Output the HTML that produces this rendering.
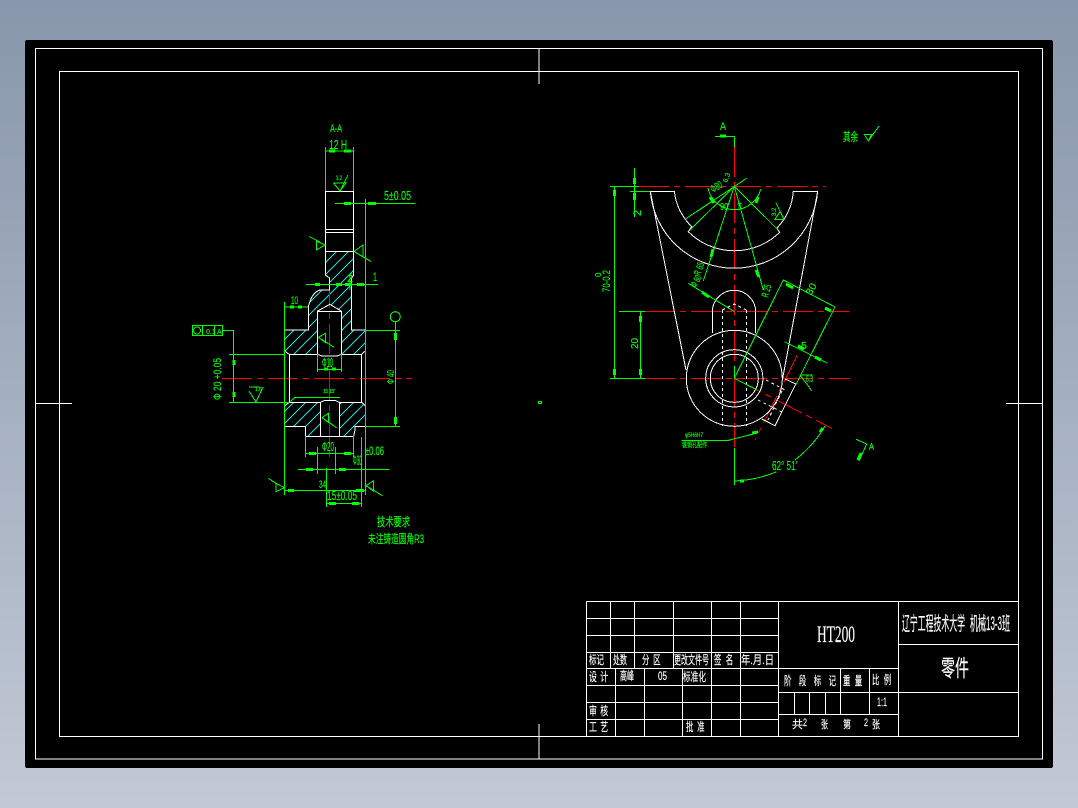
<!DOCTYPE html>
<html><head><meta charset="utf-8"><style>
html,body{margin:0;padding:0;width:1078px;height:808px;overflow:hidden;background:linear-gradient(#8897ab,#c2c9d6)}
svg{position:absolute;left:0;top:0}
text{font-family:"Liberation Sans","Noto Sans CJK SC",sans-serif}
.w line,.w path,.w polyline,.w circle,.w rect{fill:none;stroke:#fff;stroke-width:1}
.g line,.g path,.g polyline,.g circle,.g rect{fill:none;stroke:#0f0;stroke-width:1}
.g text{fill:#0f0;stroke:#0f0;stroke-width:.15}.t text{fill:#fff;stroke:#fff;stroke-width:.15}
.a line{stroke:#0f0;stroke-width:3}
.r line{stroke:#f00;stroke-width:1;stroke-dasharray:30 5 6 5}
.d path,.d line{fill:none;stroke:#fff;stroke-width:1;stroke-dasharray:3 3}
</style></head><body>
<svg width="1078" height="808" viewBox="0 0 1078 808" shape-rendering="crispEdges">
<defs><pattern id="h" width="12" height="12" patternUnits="userSpaceOnUse"><path d="M-1 13L13 -1M-1 1L1 -1M11 13L13 11" stroke="#1dd" stroke-width="1" fill="none"/></pattern></defs>
<rect x="25" y="40" width="1028" height="728" rx="2" fill="#000"/>
<g class="w">
<rect x="35.5" y="48.5" width="1007" height="710.5"/>
<rect x="59.5" y="71.5" width="959" height="665"/>
<line x1="539" y1="48" x2="539" y2="84"/><line x1="539" y1="724" x2="539" y2="759"/>
<line x1="35" y1="403.5" x2="72" y2="403.5"/><line x1="1006" y1="403.5" x2="1043" y2="403.5"/>
</g>
<rect x="538.5" y="401.5" width="3" height="2" fill="none" stroke="#0f0"/>

<!-- left view hatch -->
<path fill="url(#h)" d="M325.3 251.3H353.7V275L351.7 278V330H365.3V351L361.7 354.3H341.7V311.3L329.7 304.3 317.3 311.3V354.3H289.3L284.3 351V330H308.3V306.7Q312 292 320 290H329.7V278L325.3 275Z"/>
<path fill="url(#h)" d="M289.3 402.3H320.3V436.3H305.3V426.3H284.3V406ZM339.3 402.3H361.7L365.3 406V426.3H355L353.7 436.3H339.3Z"/>

<!-- red centre lines -->
<g class="r">
<line x1="222" y1="378.5" x2="412" y2="378.5"/>
<line x1="329.7" y1="278" x2="329.7" y2="457"/>
<line x1="639" y1="186.5" x2="825" y2="186.5"/>
<line x1="645" y1="311.5" x2="849" y2="311.5"/>
<line x1="645" y1="378.5" x2="849" y2="378.5"/>
<line x1="734.5" y1="147" x2="734.5" y2="447"/>
<line x1="734.3" y1="378.3" x2="832" y2="428.5"/>
<line x1="797.3" y1="355" x2="755" y2="440"/>
</g>

<!-- left view outlines -->
<g class="w">
<path d="M325.3 191.3H353.7V275L351.7 278V330H365.3V426.3H355V430L353.7 436.3H305.3V426.3H284.3V330H308.3V306.7Q312 292 320 290H329.7V278L325.3 275Z"/>
<path d="M325.3 229.3H353.7M325.3 232.3H353.7M325.3 251.3H353.7"/>
<path d="M317.3 354.3V311.3L329.7 304.3 341.7 311.3V354.3M317.3 311.3H341.7"/>
<path d="M284.3 351L289.3 354.3H317.3L322 356H337L341.7 354.3H361.7L365.3 351"/>
<path d="M284.3 406L289.3 402.3H320.3L325 400.3H335L339.3 402.3H361.7L365.3 406"/>
<path d="M289.3 354.3V402.3M361.7 354.3V402.3M320.3 402.3V436.3M339.3 402.3V436.3"/>
</g>

<!-- left view dims -->
<g class="g">
<path d="M325.5 147V191M353.5 147V191M325 151H354"/>
<path d="M335 203.5H415M365.5 199V495M306 284.5H378M350 275V290"/>
<path d="M284.5 302V495M284 307H308"/>
<circle cx="395.3" cy="316.7" r="5"/>
<path d="M395.5 322V426M365 330.5H400M365 426.5H400"/>
<rect x="192.5" y="325.5" width="30" height="10"/><circle cx="197" cy="330.5" r="3.5"/>
<path d="M202.5 325V335M214.5 325V335M222 330.5H233.5V402.5M229 354.5H285M229 402.5H289"/>
<path d="M317.5 354V372M341.5 354V372M317 369.5H342"/>
<path d="M290 401.7L295 397.5H340"/>
<path d="M305.5 436V457M353.5 436V457M305 453.5H353"/>
<path d="M298 469.5H389M317.5 447V474M335.5 447V474M361.5 437V495"/>
<path d="M284 490.5H366M326.5 468V507M361.5 490V507M326 503.5H362"/>
<path d="M318.3 337.3L325.7 333.3V342.7L318.3 337.3 334 347.3"/>
<path d="M322 417.7L328.3 413.3V422.3L322 417.7 336.7 427.7"/>
<path d="M268.3 478.3L276 483.3V491.7L284.3 487.7 276 483.3"/>
<path d="M366 485.7L373.3 481V491L366 485.7 382.3 495.7"/>
<path d="M309 236.5L320 242 316.5 241V250L325 245 316.5 241"/>
<path d="M354 251.5L363 245V257L354 251.5 371 261.5"/>
<path d="M333.5 183H346L340 191 333.5 183M340 191L348 175"/>
<path d="M249 387H260M249 391L256 402 263 387"/>
</g>
<g class="a">
<line x1="329" y1="151" x2="335" y2="151"/><line x1="344" y1="151" x2="351" y2="151"/>
<line x1="344" y1="203.5" x2="351" y2="203.5"/><line x1="368" y1="203.5" x2="376" y2="203.5"/>
<line x1="315" y1="284.5" x2="320" y2="284.5"/><line x1="336" y1="284.5" x2="342" y2="284.5"/><line x1="345" y1="284.5" x2="352" y2="284.5"/><line x1="357" y1="284.5" x2="364" y2="284.5"/>
<line x1="290" y1="307" x2="294" y2="307"/><line x1="298" y1="307" x2="302" y2="307"/>
<line x1="395.3" y1="333" x2="395.3" y2="340"/><line x1="395.3" y1="417" x2="395.3" y2="424"/>
<line x1="234" y1="360" x2="234" y2="365"/><line x1="234" y1="392" x2="234" y2="397"/>
<line x1="324" y1="369" x2="328" y2="369"/><line x1="332" y1="369" x2="336" y2="369"/>
<line x1="309" y1="453.5" x2="316" y2="453.5"/><line x1="344" y1="453.5" x2="351" y2="453.5"/>
<line x1="306" y1="469.5" x2="313" y2="469.5"/><line x1="339" y1="469.5" x2="346" y2="469.5"/>
<line x1="288" y1="490.5" x2="294" y2="490.5"/><line x1="356" y1="490.5" x2="364" y2="490.5"/>
<line x1="329" y1="503.5" x2="336" y2="503.5"/><line x1="352" y1="503.5" x2="359" y2="503.5"/>
</g>
<g class="g">
<text x="330" y="132" font-size="11" textLength="12" lengthAdjust="spacingAndGlyphs">A-A</text>
<text x="329" y="149" font-size="13" textLength="18" lengthAdjust="spacingAndGlyphs">12 H</text>
<text x="336" y="180" font-size="6" textLength="6" lengthAdjust="spacingAndGlyphs">3.2</text>
<text x="384" y="200" font-size="13" textLength="27" lengthAdjust="spacingAndGlyphs">5±0.05</text>
<text x="373" y="281" font-size="12" textLength="4" lengthAdjust="spacingAndGlyphs">1</text>
<text x="347" y="282" font-size="11" textLength="6" lengthAdjust="spacingAndGlyphs">2</text>
<text x="291" y="304" font-size="11" textLength="7" lengthAdjust="spacingAndGlyphs">10</text>
<text x="322" y="367" font-size="13" textLength="11" lengthAdjust="spacingAndGlyphs">Φ10</text>
<text x="322" y="451" font-size="13" textLength="12" lengthAdjust="spacingAndGlyphs">Φ20</text>
<text x="353" y="465" font-size="14" textLength="9" lengthAdjust="spacingAndGlyphs">Φ30</text>
<text x="365" y="455" font-size="12" textLength="19" lengthAdjust="spacingAndGlyphs">±0.06</text>
<text x="319" y="488" font-size="11" textLength="7" lengthAdjust="spacingAndGlyphs">34</text>
<text x="327" y="500" font-size="13" textLength="30" lengthAdjust="spacingAndGlyphs">15±0.05</text>
<text x="323" y="393" font-size="5" textLength="12" lengthAdjust="spacing">15 15'</text>
<text x="255" y="391" font-size="5">1.6</text>
<text x="377" y="526" font-size="12" textLength="33" lengthAdjust="spacingAndGlyphs">技术要求</text>
<text x="368" y="543" font-size="12" textLength="56" lengthAdjust="spacingAndGlyphs">未注铸造圆角R3</text>
<text transform="translate(221,400) rotate(-90)" font-size="11" textLength="42" lengthAdjust="spacingAndGlyphs">Φ 20 +0.05</text>
<text transform="translate(394,384) rotate(-90)" font-size="10" textLength="14" lengthAdjust="spacingAndGlyphs">Φ 40</text>
<text x="206" y="334" font-size="7">0.1</text>
<text x="217" y="334" font-size="7">A</text>
</g>

<!-- right view outlines -->
<g class="w">
<path d="M674.3 191.3H650.3A84 84 0 0 0 817.7 191.3H793.3A59 59 0 0 1 776.7 228.3L779.7 232.3A65 65 0 0 1 688.3 231.7L691.7 226.7A60 60 0 0 1 674.3 191.3"/>
<path d="M650.3 191.3L686 370M817.7 191.3L782.7 378"/>
<circle cx="734.3" cy="378.3" r="48"/>
<circle cx="734.3" cy="378.3" r="24"/><circle cx="734.3" cy="378.3" r="28.6"/>
<path d="M712.3 333V312A21.7 21.7 0 0 1 755.7 312V333"/>
<path d="M785.3 379L795.7 384 775 425.7 761.7 419"/>
</g>
<g class="d">
<path d="M722.3 310V426M746.3 310V426M722.3 310L734.3 304 746.3 310"/>
<path d="M766 380L787 391M758 400L782 412M782 391L768 420"/>
</g>

<!-- right view dims -->
<g class="g">
<path d="M634.5 168V217M610 186.5H639M630 191.5H650M614.5 186V378M610 378.5H645M619 311.5H645M640.5 311V378"/>
<path d="M715 136.5H734.5V147"/>
<path d="M708 188A27 27 0 0 0 760.7 189"/>
<path d="M685 219.3L746.7 178.3M690 230L734.3 186.3 778.3 230"/>
<path d="M734.3 186.3L703.3 281M734.3 186.3L763.3 290"/>
<path d="M688.3 283.3L734.3 311.6"/>
<path d="M734.3 378.3L783.3 280L835 307"/>
<path d="M835 307L795.7 385"/>
<path d="M784.3 341.7L827.7 363.3"/>
<path d="M800 375H812.7M800 375L811.7 390.7"/>
<path d="M775.7 202.3L784 219.3H775L780 211.7"/>
<path d="M681.7 440.7H727L758.3 432.7"/>
<path d="M734.5 448V485"/>
<path d="M734.5 481Q757 480 776.7 471.7M795 460Q814 445 825 426"/>
<path d="M856 439.3L866.7 444 859 461"/>
<path d="M864.3 134.3L868.3 141 871.7 134.3ZM868.3 141L879 126"/>
<path d="M734.5 378.5V366M734.3 378.3L757 390"/>
</g>
<g class="a">
<line x1="720" y1="136" x2="726" y2="136"/>
<line x1="634.5" y1="178" x2="634.5" y2="184"/><line x1="634.5" y1="193" x2="634.5" y2="200"/>
<line x1="614.5" y1="190" x2="614.5" y2="196"/><line x1="614.5" y1="369" x2="614.5" y2="375"/>
<line x1="640.5" y1="316" x2="640.5" y2="322"/><line x1="640.5" y1="369" x2="640.5" y2="375"/>
<line x1="710" y1="197" x2="714" y2="203"/><line x1="758" y1="197" x2="756" y2="203"/>
<line x1="713" y1="249" x2="711" y2="257"/><line x1="756" y1="270" x2="759" y2="277"/>
<line x1="702" y1="292" x2="709" y2="297"/><line x1="786" y1="284" x2="793" y2="288"/>
<line x1="825" y1="308" x2="831" y2="311"/><line x1="798" y1="346" x2="804" y2="349"/><line x1="815" y1="357" x2="821" y2="360"/>
<line x1="740" y1="481" x2="744" y2="481"/><line x1="820" y1="432" x2="823" y2="428"/>
<line x1="752" y1="433" x2="758" y2="432"/><line x1="861" y1="453" x2="858" y2="460"/>
</g>
<g class="g">
<text x="720" y="130" font-size="11" textLength="6" lengthAdjust="spacingAndGlyphs">A</text>
<text x="843" y="141" font-size="12" textLength="15" lengthAdjust="spacingAndGlyphs">其余</text>
<text transform="translate(727,183) rotate(-70)" font-size="7">6.3</text>
<text transform="translate(713,193) rotate(-30)" font-size="11" textLength="12" lengthAdjust="spacingAndGlyphs">Φ80</text>
<text x="720" y="210" font-size="10" textLength="8" lengthAdjust="spacingAndGlyphs">90</text>
<text x="737" y="210" font-size="10" textLength="5" lengthAdjust="spacingAndGlyphs">1T</text>
<text transform="translate(776,216) rotate(-90)" font-size="6">3.2</text>
<text transform="translate(641,216) rotate(-90)" font-size="11">2</text>
<text transform="translate(610,292) rotate(-90)" font-size="11" textLength="22" lengthAdjust="spacingAndGlyphs">70-0.2</text>
<text transform="translate(601,277) rotate(-90)" font-size="8">0</text>
<text transform="translate(638,349) rotate(-90)" font-size="10" textLength="11" lengthAdjust="spacingAndGlyphs">20</text>
<text transform="translate(700,276) rotate(-70)" font-size="10" textLength="13" lengthAdjust="spacingAndGlyphs">R 65</text>
<text transform="translate(696,288) rotate(-60)" font-size="10" textLength="12" lengthAdjust="spacingAndGlyphs">Φ 60</text>
<text transform="translate(768,298) rotate(-75)" font-size="10" textLength="13" lengthAdjust="spacingAndGlyphs">R 25</text>
<text transform="translate(811,296) rotate(-60)" font-size="10" textLength="12" lengthAdjust="spacingAndGlyphs">30</text>
<text x="801" y="349" font-size="10" textLength="6" lengthAdjust="spacingAndGlyphs">5</text>
<text x="806" y="382" font-size="9" textLength="7" lengthAdjust="spacingAndGlyphs">6.3</text>
<text x="685" y="437" font-size="6" textLength="18" lengthAdjust="spacingAndGlyphs">φ5H6H7</text>
<text x="682" y="447" font-size="7" textLength="25" lengthAdjust="spacingAndGlyphs">锥销孔配作</text>
<text x="772" y="470" font-size="13" textLength="25" lengthAdjust="spacingAndGlyphs">62° 51'</text>
<text x="869" y="450" font-size="10" textLength="5" lengthAdjust="spacingAndGlyphs">A</text>
</g>

<!-- title block -->
<g class="w">
<path d="M586.5 601.5H1018.5M586.5 618.5H778.5M586.5 635.5H778.5M586.5 652.5H778.5M586.5 668.5H898.5M586.5 685.5H778.5M586.5 702.5H778.5M586.5 719.5H778.5"/>
<path d="M586.5 601.5V736.5M610.5 601.5V668.5M634.5 601.5V668.5M673.5 601.5V668.5M711.5 601.5V736.5M740.5 601.5V736.5M778.5 601.5V736.5"/>
<path d="M615.5 668.5V736.5M644.5 668.5V736.5M682.5 668.5V736.5"/>
<path d="M898.5 601.5V736.5M898.5 644.5H1018.5M778.5 692.5H1018.5M778.5 714.5H898.5"/>
<path d="M840.5 668.5V714.5M869.5 668.5V714.5M794.5 692.5V714.5M809.5 692.5V714.5M825.5 692.5V714.5"/>
</g>
<g class="t">
<text x="589" y="664" font-size="12" textLength="15" lengthAdjust="spacingAndGlyphs">标记</text>
<text x="613" y="664" font-size="12" textLength="14" lengthAdjust="spacingAndGlyphs">处数</text>
<text transform="translate(642,664) scale(.62,1)" font-size="12" letter-spacing="6">分区</text>
<text x="674" y="664" font-size="12" textLength="35" lengthAdjust="spacingAndGlyphs">更改文件号</text>
<text transform="translate(714,664) scale(.62,1)" font-size="12" letter-spacing="7">签名</text>
<text x="741" y="664" font-size="12" textLength="33" lengthAdjust="spacingAndGlyphs">年.月.日</text>
<text transform="translate(589,681) scale(.66,1)" font-size="12" letter-spacing="5">设计</text>
<text x="620" y="680" font-size="12" textLength="14" lengthAdjust="spacingAndGlyphs">高峰</text>
<text x="658" y="680" font-size="12" textLength="9" lengthAdjust="spacingAndGlyphs">05</text>
<text x="683" y="681" font-size="12" textLength="23" lengthAdjust="spacingAndGlyphs">标准化</text>
<text transform="translate(589,715) scale(.66,1)" font-size="12" letter-spacing="5">审核</text>
<text transform="translate(589,731) scale(.66,1)" font-size="12" letter-spacing="5">工艺</text>
<text transform="translate(686,731) scale(.62,1)" font-size="12" letter-spacing="6">批准</text>
<text x="817" y="642" font-size="23" textLength="38" lengthAdjust="spacingAndGlyphs" style="font-family:'Liberation Serif',serif">HT200</text>
<text x="902" y="630" font-size="19" textLength="63" lengthAdjust="spacingAndGlyphs">辽宁工程技术大学</text>
<text x="970" y="630" font-size="19" textLength="40" lengthAdjust="spacingAndGlyphs">机械13-3班</text>
<text x="941" y="676" font-size="23" textLength="28" lengthAdjust="spacingAndGlyphs">零件</text>
<text transform="translate(784,685) scale(.62,1)" font-size="12" letter-spacing="12">阶段标记</text>
<text transform="translate(843,685) scale(.62,1)" font-size="12" letter-spacing="7">重量</text>
<text transform="translate(872,684) scale(.62,1)" font-size="12" letter-spacing="7">比例</text>
<text x="877" y="706" font-size="12" textLength="10" lengthAdjust="spacingAndGlyphs">1:1</text>
<text x="792" y="728" font-size="11">共</text>
<text x="803" y="726" font-size="11" textLength="4" lengthAdjust="spacingAndGlyphs">2</text>
<text x="821" y="728" font-size="11" textLength="7" lengthAdjust="spacingAndGlyphs">张</text>
<text x="843" y="728" font-size="11" textLength="8" lengthAdjust="spacingAndGlyphs">第</text>
<text x="864" y="726" font-size="11" textLength="4" lengthAdjust="spacingAndGlyphs">2</text>
<text x="872" y="728" font-size="11" textLength="8" lengthAdjust="spacingAndGlyphs">张</text>
</g>
</svg>
</body></html>
